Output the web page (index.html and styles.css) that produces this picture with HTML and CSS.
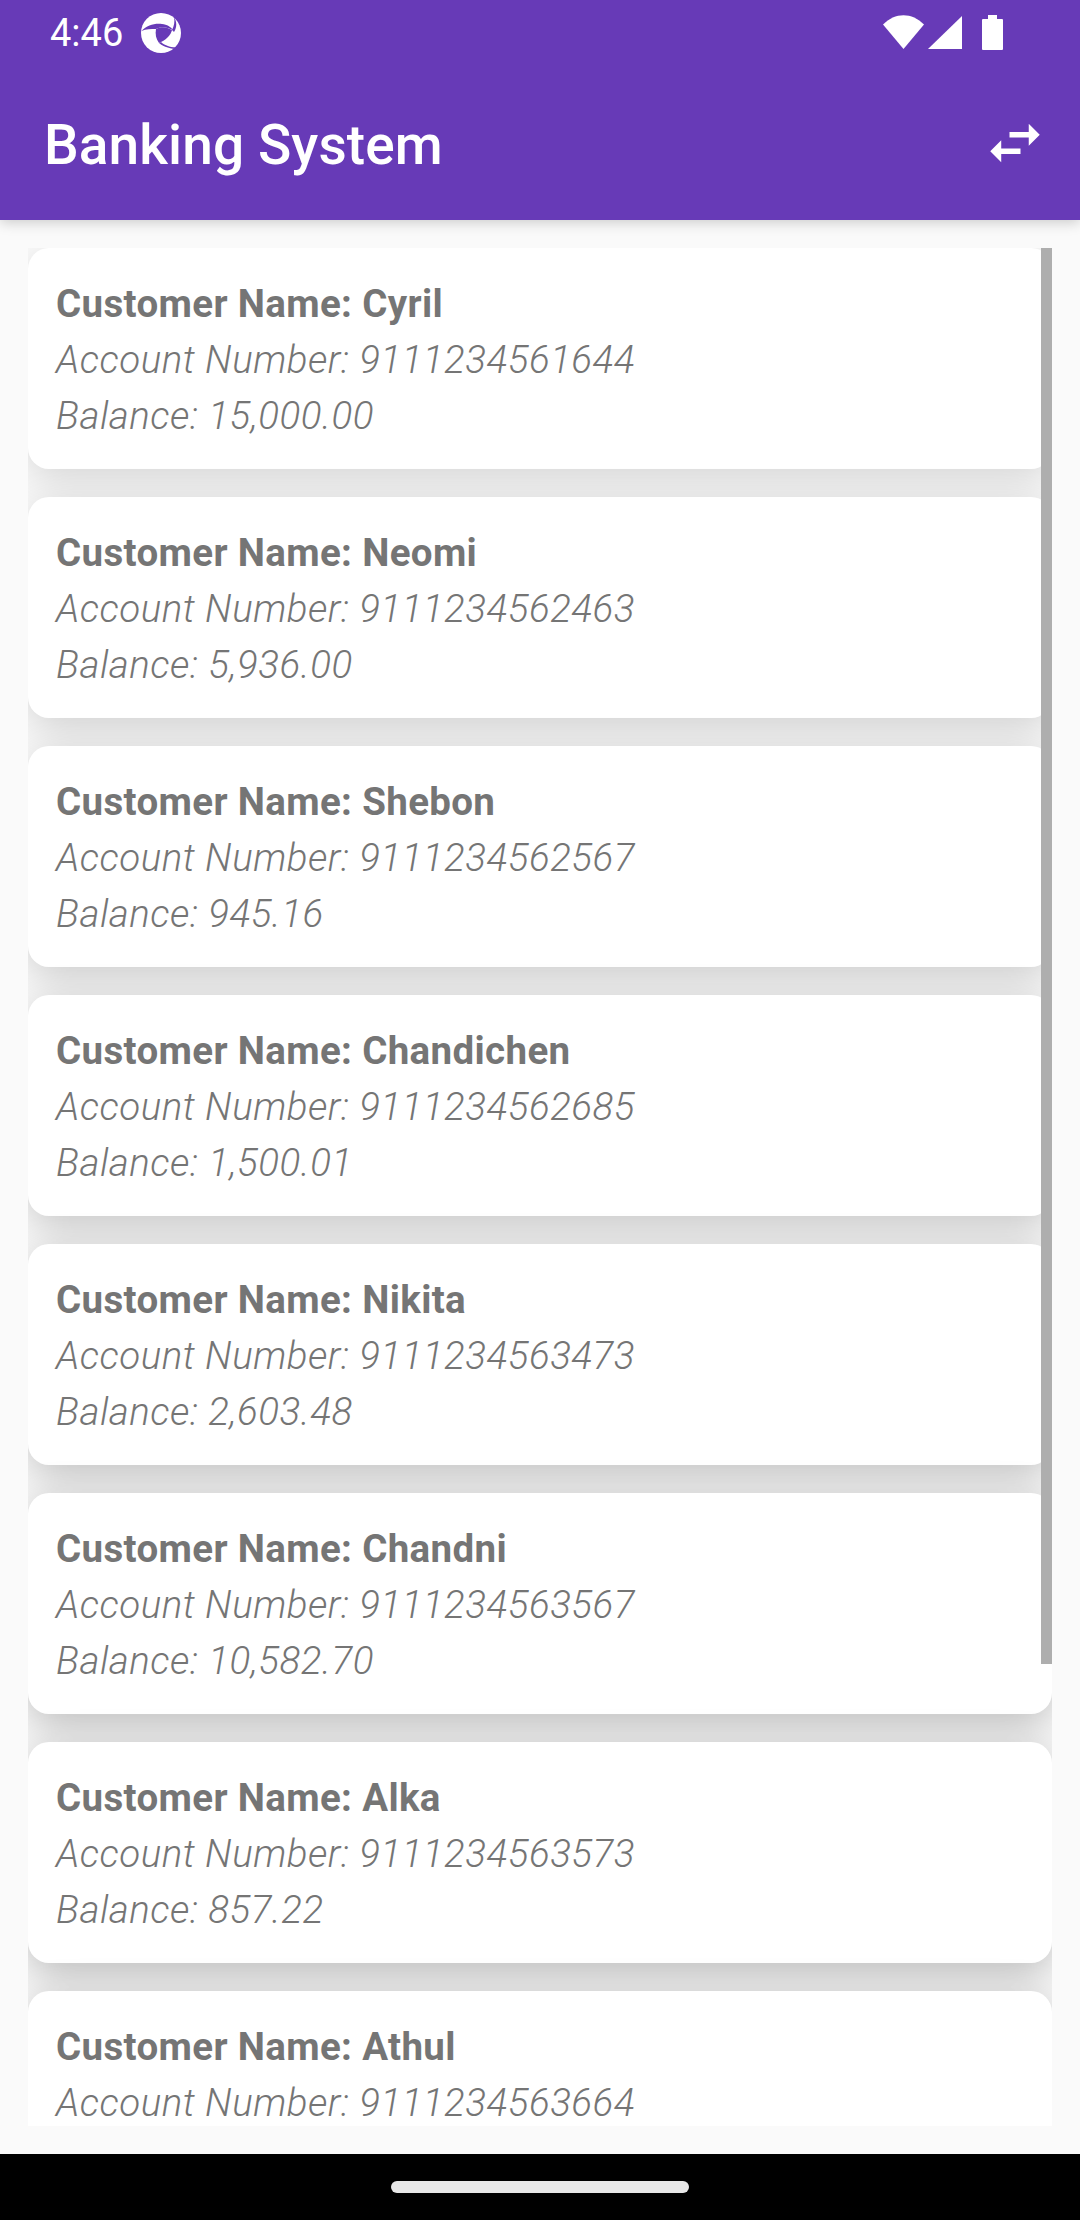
FILE: index.html

```html
<!DOCTYPE html>
<html lang="en">
<head>
  <meta charset="UTF-8" />
  <title>Banking System</title>
  <link rel="stylesheet" href="styles.css">
</head>
<body>
  <header class="appbar">
    <div class="status">
      <div class="status-left">
        <span class="clock">4:46</span>
        <svg class="logo" viewBox="0 0 40 42" width="40" height="42">
          <circle cx="20" cy="21" r="20" fill="#fff"/>
          <path d="M0.500 19C6 13 14 11 21 12C26 12.500 30 15 32 18C26 15 20 14 15 17C10 17 5 17 0.500 19Z" fill="#673ab7"/>
          <path d="M15 17C20 14 26 15 31 18C30 23 25 28 18 31C15 27 14 22 15 17Z" fill="#673ab7"/>
          <path d="M33 5C36 10 36 15 33 20L31 18C33 14 34 10 33 5Z" fill="#673ab7"/>
          <path d="M18 31C23 35 30 37 37 37L38 35C31 36 24 34 20 30Z" fill="#673ab7"/>
        </svg>
      </div>
      <div class="status-right">
        <svg class="wifi" viewBox="0 0 41 34" width="41" height="34"><path d="M0 9.500C12 -3 29 -3 41 9.500L20.500 34Z" fill="#fff"/></svg>
        <svg class="signal" viewBox="0 0 34 33" width="34" height="33"><path d="M0 33L34 0V33Z" fill="#fff"/></svg>
        <svg class="battery" viewBox="0 0 21 35" width="21" height="35"><path d="M6 0H15V4H20Q21 4 21 5V34Q21 35 20 35H1Q0 35 0 34V5Q0 4 1 4H6Z" fill="#fff"/></svg>
      </div>
    </div>
    <div class="toolbar">
      <h1 class="title">Banking System</h1>
      <svg class="swap" viewBox="0 0 24 24" width="66" height="66"><path d="M6.99 11L3 15l3.99 4v-3H14v-2H6.99v-3zM21 9l-4-4v3h-7v2h7v3l4-4z" fill="#fff"/></svg>
    </div>
  </header>

  <main class="content">
    <div class="list">
      <div class="card">
        <p class="name">Customer Name: Cyril</p>
        <p class="line">Account Number: 9111234561644</p>
        <p class="line">Balance: 15,000.00</p>
      </div>
      <div class="card">
        <p class="name">Customer Name: Neomi</p>
        <p class="line">Account Number: 9111234562463</p>
        <p class="line">Balance: 5,936.00</p>
      </div>
      <div class="card">
        <p class="name">Customer Name: Shebon</p>
        <p class="line">Account Number: 9111234562567</p>
        <p class="line">Balance: 945.16</p>
      </div>
      <div class="card">
        <p class="name">Customer Name: Chandichen</p>
        <p class="line">Account Number: 9111234562685</p>
        <p class="line">Balance: 1,500.01</p>
      </div>
      <div class="card">
        <p class="name">Customer Name: Nikita</p>
        <p class="line">Account Number: 9111234563473</p>
        <p class="line">Balance: 2,603.48</p>
      </div>
      <div class="card">
        <p class="name">Customer Name: Chandni</p>
        <p class="line">Account Number: 9111234563567</p>
        <p class="line">Balance: 10,582.70</p>
      </div>
      <div class="card">
        <p class="name">Customer Name: Alka</p>
        <p class="line">Account Number: 9111234563573</p>
        <p class="line">Balance: 857.22</p>
      </div>
      <div class="card">
        <p class="name">Customer Name: Athul</p>
        <p class="line">Account Number: 9111234563664</p>
      </div>
      <div class="scrollbar"></div>
    </div>
  </main>

  <footer class="navbar">
    <div class="pill"></div>
  </footer>
</body>
</html>
```

FILE: styles.css

```css
html, body {
  height: 100%;
}
body {
  margin: 0;
  font-family: Roboto, "Liberation Sans", sans-serif;
  display: flex;
  flex-direction: column;
  height: 2220px;
  overflow: hidden;
  background-color: #fafafa;
}
p, h1 {
  margin: 0;
}
.appbar {
  height: 220px;
  flex: none;
  background-color: #673ab7;
  color: white;
  box-shadow: 0 3px 12px rgba(0, 0, 0, 0.18);
  position: relative;
  z-index: 2;
}
.status {
  height: 64px;
  display: flex;
  justify-content: space-between;
  align-items: center;
  padding: 0 77px 0 50px;
}
.status-left {
  display: flex;
  align-items: center;
  gap: 18px;
  padding-top: 2px;
}
.clock {
  font-size: 38px;
  line-height: 64px;
}
.logo, .wifi, .signal, .battery, .swap {
  display: block;
  flex: none;
}
.status-right {
  display: flex;
  align-items: center;
  gap: 4px;
}
.battery {
  margin-left: 16px;
}
.toolbar {
  height: 156px;
  display: flex;
  justify-content: space-between;
  align-items: center;
  padding: 2px 32px 0 44px;
  box-sizing: border-box;
}
.title {
  font-size: 55px;
  font-weight: 500;
  margin-top: 3px;
  letter-spacing: 0.1px;
}
.content {
  flex: 1;
  min-height: 0;
  padding: 28px;
  box-sizing: border-box;
}
.list {
  position: relative;
  height: 100%;
  overflow: hidden;
  display: flex;
  flex-direction: column;
  gap: 28px;
}
.card {
  --shade: 0.26;
  flex: none;
  height: 221px;
  padding: 28px;
  box-sizing: border-box;
  background-color: white;
  border-radius: 21px;
  box-shadow: 0 10px 40px rgba(0, 0, 0, var(--shade));
  color: #757575;
  font-size: 38.5px;
  line-height: 56px;
}
/* shadows get heavier further down the screen */
.card:nth-child(1) { --shade: 0.15; }
.card:nth-child(2) { --shade: 0.17; }
.card:nth-child(3) { --shade: 0.19; }
.card:nth-child(4) { --shade: 0.21; }
.card:nth-child(5) { --shade: 0.23; }
.card:nth-child(6) { --shade: 0.25; }
.name {
  font-weight: 700;
  letter-spacing: 0.35px;
}
.line {
  font-style: italic;
  font-weight: 350;
  letter-spacing: 0.5px;
}
.scrollbar {
  position: absolute;
  top: 0;
  right: 0;
  width: 11px;
  height: 1416px;
  background-color: #aeaeae;
}
.navbar {
  height: 66px;
  flex: none;
  background-color: black;
  display: flex;
  justify-content: center;
  align-items: center;
}
.pill {
  width: 298px;
  height: 12px;
  border-radius: 6px;
  background-color: #e8e8e8;
}
```
